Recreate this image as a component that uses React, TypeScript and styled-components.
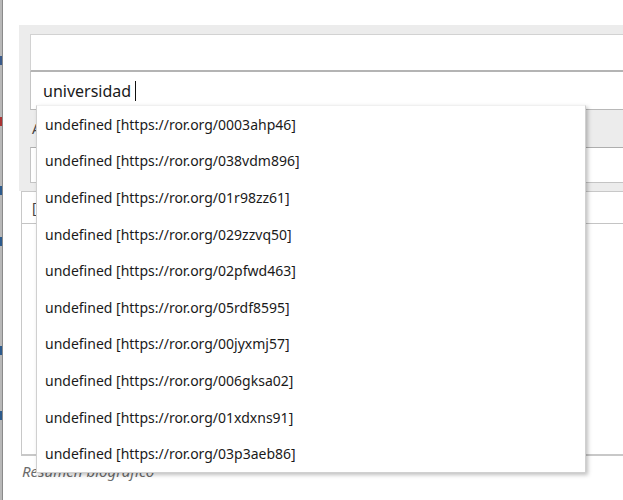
import React from 'react';
import styled, { createGlobalStyle } from 'styled-components';

const GlobalStyle = createGlobalStyle`
  html, body {
    margin: 0;
    padding: 0;
    background: #ffffff;
    font-family: "Noto Sans", "Open Sans", sans-serif;
    overflow: hidden;
  }
`;

const Page = styled.div`
  display: flex;
  width: 623px;
  height: 500px;
  overflow: hidden;
`;

const Gutter = styled.div`
  width: 2px;
  flex: none;
  background: #b8b8b8;
  border-right: 1px solid #8a8a8a;
  display: flex;
  flex-direction: column;
`;

const Mark = styled.div<{ $color: string; $top: number }>`
  width: 2px;
  height: 9px;
  margin-top: ${(p) => p.$top}px;
  background: ${(p) => p.$color};
`;

const Main = styled.div`
  flex: 1;
  min-width: 0;
  padding: 25px 0 0 16px;
  display: flex;
  flex-direction: column;
`;

const Panel = styled.div`
  background: #ececec;
  padding: 9px 0 8px 11px;
  display: flex;
  flex-direction: column;
  width: 640px;
`;

const TopInput = styled.div`
  height: 35px;
  background: #ffffff;
  border-top: 1px solid #d2d2d2;
  border-left: 1px solid #d2d2d2;
  border-bottom: 2px solid #b4b4b4;
`;

const SearchWrap = styled.div`
  position: relative;
`;

const SearchInput = styled.div`
  height: 37px;
  background: #ffffff;
  border-left: 1px solid #c4c4c4;
  border-bottom: 1px solid #b8b8b8;
  display: flex;
  align-items: center;
  padding-left: 12px;
  font-size: 16px;
  color: #1a1a1a;
`;

const Caret = styled.span`
  display: inline-block;
  width: 0;
  height: 20px;
  margin-left: 4px;
  border-left: 1px solid #111;
`;

const LabelRow = styled.div`
  height: 37px;
  display: flex;
  align-items: center;
  font-size: 14px;
  color: #444;
  padding-left: 2px;
`;

const FieldInput = styled.div`
  height: 34px;
  background: #ffffff;
  border-top: 1px solid #aeaeae;
  border-left: 1px solid #c4c4c4;
  border-bottom: 1px solid #c4c4c4;
`;

const Editor = styled.div`
  margin-left: 2px;
  height: 262px;
  border: 1px solid #c8c8c8;
  border-right: none;
  border-bottom: 2px solid #c8c8c8;
  width: 640px;
  display: flex;
  flex-direction: column;
`;

const EditorBar = styled.div`
  height: 31px;
  border-bottom: 1px solid #c4c4c4;
  display: flex;
  align-items: center;
  padding-left: 10px;
  font-size: 14px;
  color: #444;
`;

const Caption = styled.div`
  margin: 5px 0 0 3px;
  font-size: 15px;
  font-style: italic;
  color: #6b6b6b;
`;

const Dropdown = styled.ul`
  position: absolute;
  top: calc(100% - 5px);
  left: 6px;
  width: 548px;
  margin: 0;
  padding: 0;
  list-style: none;
  background: #ffffff;
  border: 1px solid #d0d0d0;
  border-top-color: #f0f0f0;
  box-shadow: 2px 2px 4px rgba(0, 0, 0, 0.25);
  z-index: 10;
`;

const Option = styled.li`
  height: 36.6px;
  display: flex;
  align-items: center;
  padding-left: 8px;
  font-size: 14px;
  color: #1a1a1a;
  white-space: nowrap;
`;

const rors = [
  '0003ahp46',
  '038vdm896',
  '01r98zz61',
  '029zzvq50',
  '02pfwd463',
  '05rdf8595',
  '00jyxmj57',
  '006gksa02',
  '01xdxns91',
  '03p3aeb86',
];

const App: React.FC = () => {
  return (
    <>
      <GlobalStyle />
      <Page>
        <Gutter>
          <Mark $color="#3a5a8a" $top={56} />
          <Mark $color="#a33" $top={52} />
          <Mark $color="#2c5a8c" $top={60} />
          <Mark $color="#2c5a8c" $top={42} />
          <Mark $color="#2c5a8c" $top={100} />
          <Mark $color="#2c5a8c" $top={56} />
        </Gutter>
        <Main>
          <Panel>
            <TopInput />
            <SearchWrap>
              <SearchInput>
                universidad
                <Caret />
              </SearchInput>
              <Dropdown>
                {rors.map((id) => (
                  <Option key={id}>undefined [https://ror.org/{id}]</Option>
                ))}
              </Dropdown>
            </SearchWrap>
            <LabelRow>A</LabelRow>
            <FieldInput />
          </Panel>
          <Editor>
            <EditorBar>[</EditorBar>
          </Editor>
          <Caption>Resumen biográfico</Caption>
        </Main>
      </Page>
    </>
  );
};

export default App;
